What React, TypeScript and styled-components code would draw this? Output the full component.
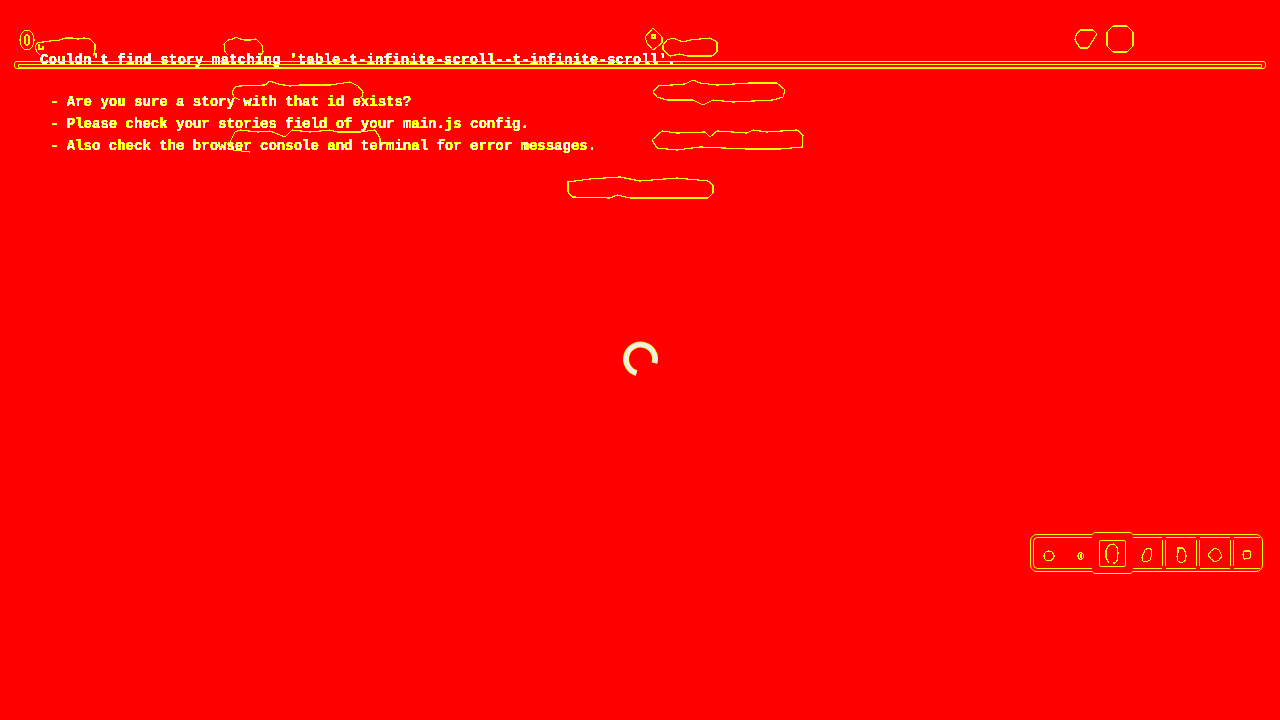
import React from "react";
import styled, { createGlobalStyle } from "styled-components";

const YELLOW = "#ffff00";

const GlobalStyle = createGlobalStyle`
  html, body {
    margin: 0;
    padding: 0;
    height: 100%;
    background: #ff0000;
  }
  #root {
    height: 100%;
  }
`;

const Page = styled.div`
  position: relative;
  width: 1280px;
  height: 720px;
  overflow: hidden;
  box-sizing: border-box;
  padding: 49px 40px 0;
  background: #ff0000;
  font-family: "Liberation Mono", monospace;
  font-size: 14px;
  font-weight: 700;
  line-height: 22px;
  color: #ffffff;
`;

const Heading = styled.div`
  white-space: pre;
  letter-spacing: 0.19px;
  filter: url(#hard-edge);
`;

const Hints = styled.div`
  margin: 20px 0 0 10px;
  white-space: pre;
  filter: url(#hard-edge-yellow);
`;

// the double rule under the top row
const Rule = styled.div`
  position: absolute;
  left: 14px;
  top: 61px;
  width: 1252px;
  height: 8px;
  box-sizing: border-box;
  padding: 2px 3px 0;
  border: 1px solid ${YELLOW};
  border-radius: 3px;
`;

const RuleInner = styled.div`
  height: 4px;
  box-sizing: border-box;
  border: 1px solid ${YELLOW};
  border-bottom-left-radius: 1px;
`;

const Scribbles = styled.svg`
  position: absolute;
  left: 0;
  top: 0;
  pointer-events: none;
`;

const Dock = styled.div`
  position: absolute;
  left: 1030px;
  top: 534px;
  width: 233px;
  height: 38px;
  box-sizing: border-box;
  padding: 2px;
  border: 1px solid ${YELLOW};
  border-radius: 7px;
`;

const DockRow = styled.div`
  display: flex;
  align-items: stretch;
  height: 32px;
`;

const PlayCell = styled.div`
  display: flex;
  align-items: center;
  justify-content: space-between;
  width: 59px;
  box-sizing: border-box;
  padding: 5px 7px 0 9px;
  border: 1px solid ${YELLOW};
  border-right: none;
  border-radius: 5px 0 0 5px;
`;

const ActiveCell = styled.div`
  display: flex;
  align-items: center;
  justify-content: center;
  width: 41px;
  margin: -5px 0;
  box-sizing: border-box;
  border-top: 1px solid ${YELLOW};
  border-bottom: 1px solid ${YELLOW};
  border-radius: 4px;
  background: #ff0000;
`;

const ActiveBox = styled.div`
  display: flex;
  align-items: center;
  justify-content: center;
  width: 27px;
  height: 27px;
  box-sizing: border-box;
  padding-top: 1px;
  border: 1px solid ${YELLOW};
  border-radius: 2px;
`;

const ToolCell = styled.div<{ $width: number }>`
  display: flex;
  align-items: center;
  justify-content: center;
  width: ${({ $width }) => $width}px;
  box-sizing: border-box;
  padding-top: 4px;
  border-top: 1px solid ${YELLOW};
  border-bottom: 1px solid ${YELLOW};
`;

const Separator = styled.div`
  width: 4px;
  margin: 3px 0;
  box-sizing: border-box;
  border-left: 1px solid ${YELLOW};
  border-right: 1px solid ${YELLOW};
`;

const blobs = [
  "M35 47 L37 43 L43 42 L50 41 L60 40 L65 38 L72 38 L78 39 L84 38 L90 39 L95 44 L95 50 L93 56 M35 47 L37 52 L40 55",
  "M39 44 L39 49 L43 49 L43 46",
  "M224 44 L228 40 L233 39 L236 37 L240 39 L245 40 L250 40 L256 39 L262 45 L263 52 L260 56 M224 44 L225 52 L228 55",
  "M232 92 L235 87 L240 86 L265 85 L270 81 L278 84 L290 86 L300 85 L330 85 L350 82 L358 86 L363 92 L362 97 L356 100 M232 92 L234 97 L240 100",
  "M230 142 L235 132 L240 130 L258 132 L270 131 L285 137 L292 130 L310 132 L330 130 L337 132 L360 132 L375 130 L380 138 L380 150 M230 142 L233 150 L250 152",
  "M645 37 L653 28 L662 37 L662 43 L653 50 L647 43 Z",
  "M652 35 H655 V38 H652 Z",
  "M663 45 L667 40 L673 38 L683 42 L690 40 L710 38 L717 42 L717 52 L712 56 L687 56 L680 54 L670 56 L663 50 Z",
  "M653 92 L658 86 L685 84 L693 80 L700 83 L717 85 L750 83 L777 83 L785 90 L783 97 L773 100 L733 102 L713 100 L703 105 L693 100 L667 100 L657 97 Z",
  "M652 140 L662 131 L677 133 L705 132 L710 137 L717 131 L747 133 L753 130 L767 132 L797 130 L803 135 L802 147 L780 149 L747 149 L700 147 L677 150 L657 148 Z",
  "M568 182 L590 179 L620 177 L640 181 L677 178 L708 181 L713 185 L713 193 L708 198 L630 198 L617 195 L610 198 L572 197 L568 192 Z",
  "M1076 35 L1080 30 L1093 30 L1097 34 L1088 48 L1080 48 L1075 40 Z",
  "M1113 26 H1127 L1133 32 V46 L1127 52 H1113 L1107 46 V32 Z",
];

// turns the smooth glyph edges into the hard white / yellow steps of the reference
const EdgeFilters = () => (
  <svg width={0} height={0} style={{ position: "absolute" }}>
    <defs>
      <filter id="hard-edge" colorInterpolationFilters="sRGB" x="0" y="0" width="100%" height="100%">
        <feComponentTransfer in="SourceAlpha" result="wide">
          <feFuncA type="discrete" tableValues="0 1 1 1 1 1" />
        </feComponentTransfer>
        <feFlood floodColor={YELLOW} />
        <feComposite in2="wide" operator="in" result="fringe" />
        <feComponentTransfer in="SourceAlpha" result="core">
          <feFuncA type="discrete" tableValues="0 0 1 1 1" />
        </feComponentTransfer>
        <feFlood floodColor="#ffffff" />
        <feComposite in2="core" operator="in" result="white" />
        <feMerge>
          <feMergeNode in="fringe" />
          <feMergeNode in="white" />
        </feMerge>
      </filter>
      <filter id="hard-edge-yellow" colorInterpolationFilters="sRGB" x="0" y="0" width="100%" height="100%">
        <feComponentTransfer in="SourceAlpha" result="wide">
          <feFuncA type="discrete" tableValues="0 1 1 1 1 1 1 1" />
        </feComponentTransfer>
        <feFlood floodColor={YELLOW} />
        <feComposite in2="wide" operator="in" result="fringe" />
        <feComponentTransfer in="SourceAlpha" result="core">
          <feFuncA type="discrete" tableValues="0 0 0 0 0 1" />
        </feComponentTransfer>
        <feFlood floodColor="#ffffff" />
        <feComposite in2="core" operator="in" result="white" />
        <feMerge>
          <feMergeNode in="fringe" />
          <feMergeNode in="white" />
        </feMerge>
      </filter>
    </defs>
  </svg>
);

const ScribbleLayer = () => (
  <Scribbles width={1280} height={720} fill="none" stroke={YELLOW} strokeWidth={1.2} shapeRendering="crispEdges">
    {blobs.map((d) => (
      <path key={d} d={d} />
    ))}
    <ellipse cx={27} cy={40} rx={7} ry={10} />
    <rect x={25} y={35} width={4} height={10} rx={1} />
    {/* spinner */}
    <path d="M636.5 373 A14.5 14.5 0 1 1 654.5 363" stroke={YELLOW} strokeWidth={6} shapeRendering="auto" />
    <path d="M636.5 373 A14.5 14.5 0 1 1 654.5 363" stroke="#eeeeee" strokeWidth={4.5} shapeRendering="auto" />
  </Scribbles>
);

const Icon = ({ w, h, d }: { w: number; h: number; d: string }) => (
  <svg width={w} height={h} viewBox={`0 0 ${w} ${h}`} fill="none" stroke={YELLOW} strokeWidth={1.2} shapeRendering="crispEdges">
    <path d={d} />
  </svg>
);

const App = () => (
  <Page>
    <GlobalStyle />
    <EdgeFilters />
    <ScribbleLayer />
    <Heading>Couldn't find story matching 'table-t-infinite-scroll--t-infinite-scroll'.</Heading>
    <Hints>
      {"- Are you sure a story with that id exists?\n- Please check your stories field of your main.js config.\n- Also check the browser console and terminal for error messages."}
    </Hints>
    <Rule>
      <RuleInner />
    </Rule>
    <Dock>
      <DockRow>
        <PlayCell>
          <Icon w={12} h={12} d="M6 1 A5 5 0 1 1 5.9 1 Z" />
          <Icon w={9} h={10} d="M4 1 L7 3 L8 5 L7 7 L4 9 L2 6 L2 4 Z M5 3 V7" />
        </PlayCell>
        <ActiveCell>
          <ActiveBox>
            <Icon w={14} h={22} d="M4 20 L1 15 L1 7 L4 2 L9 1 L12 4 L13 10 L12 18 L10 20 L8 20" />
          </ActiveBox>
        </ActiveCell>
        <ToolCell $width={30}>
          <Icon w={13} h={16} d="M2 14 L1 10 L4 3 L7 1 L10 2 L11 7 L9 13 L5 15 Z" />
        </ToolCell>
        <Separator />
        <ToolCell $width={30}>
          <Icon w={12} h={18} d="M3 2 L8 2 L10 5 L11 10 L10 15 L6 17 L3 15 L2 10 L3 7 Z" />
        </ToolCell>
        <Separator />
        <ToolCell $width={30}>
          <Icon w={16} h={16} d="M8 1 L12 3 L15 9 L12 13 L8 15 L4 12 L1 8 L4 4 Z" />
        </ToolCell>
        <Separator />
        <ToolCell $width={26}>
          <Icon w={10} h={10} d="M2 1 L8 1 L9 4 L8 8 L2 9 L1 5 Z" />
        </ToolCell>
      </DockRow>
    </Dock>
  </Page>
);

export default App;
